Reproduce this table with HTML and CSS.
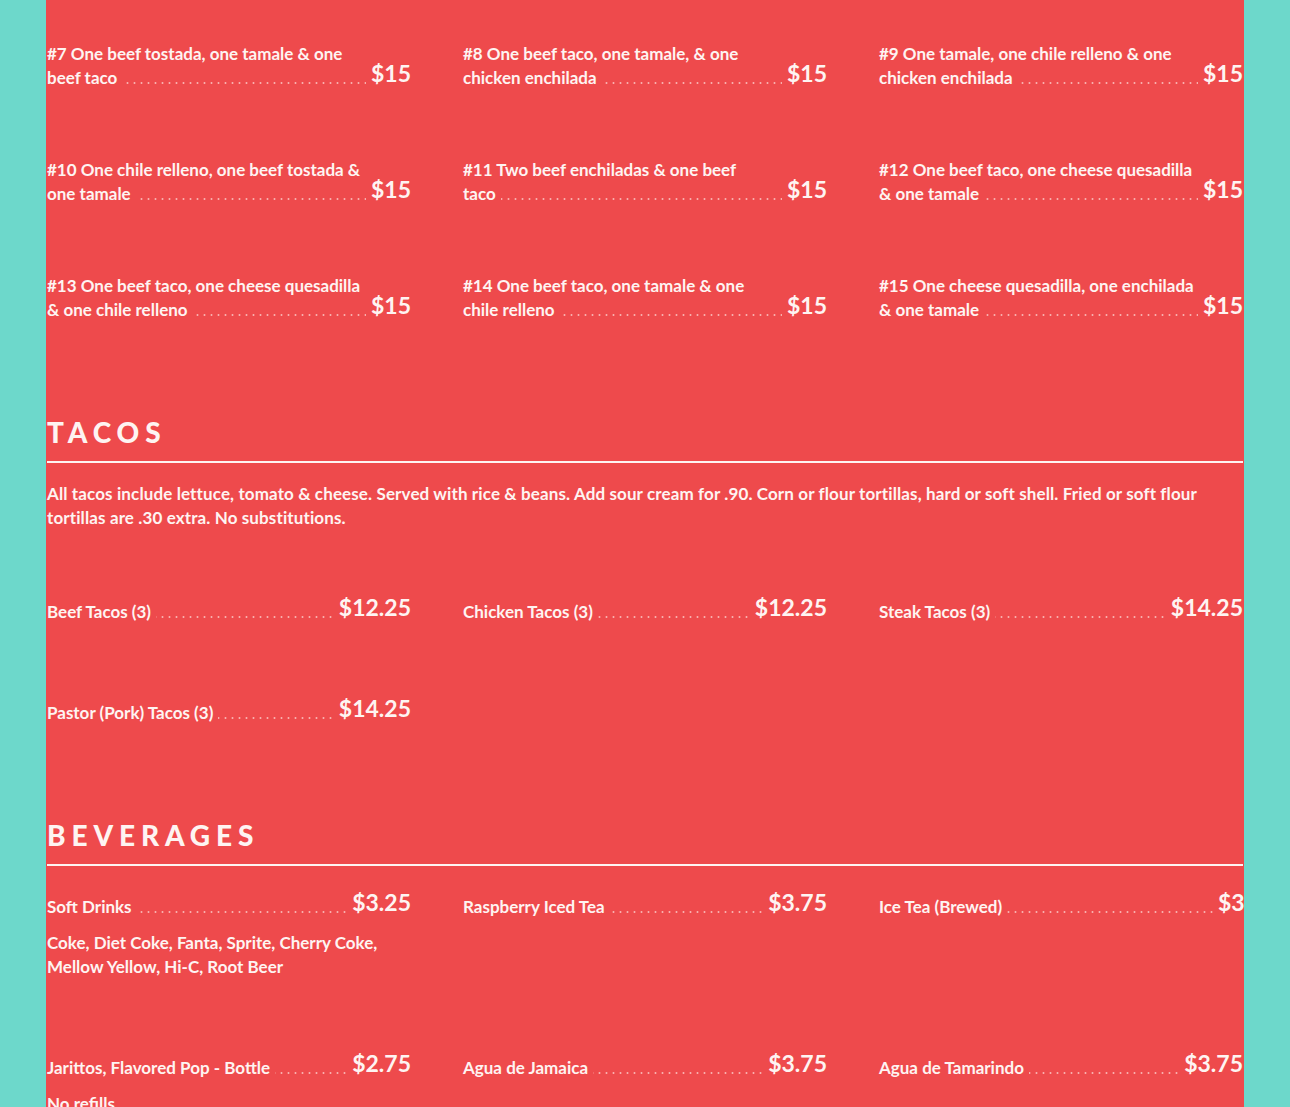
FILE: index.html
```html
<!DOCTYPE html>
<html lang="en">
<head>
<meta charset="utf-8">
<title>Menu</title>
<link rel="stylesheet" href="styles.css">
</head>
<body>
<main class="panel">
  <section class="section section--first">
    <div class="grid grid--combos">
      <div class="item"><div class="item-row"><span class="name"><span class="name-text">#7 One beef tostada, one tamale &amp; one beef taco</span></span><span class="price">$15</span></div></div>
      <div class="item"><div class="item-row"><span class="name"><span class="name-text">#8 One beef taco, one tamale, &amp; one chicken enchilada</span></span><span class="price">$15</span></div></div>
      <div class="item"><div class="item-row"><span class="name"><span class="name-text">#9 One tamale, one chile relleno &amp; one chicken enchilada</span></span><span class="price">$15</span></div></div>
      <div class="item"><div class="item-row"><span class="name"><span class="name-text">#10 One chile relleno, one beef tostada &amp; one tamale</span></span><span class="price">$15</span></div></div>
      <div class="item"><div class="item-row"><span class="name"><span class="name-text">#11 Two beef enchiladas &amp; one beef<br>taco</span></span><span class="price">$15</span></div></div>
      <div class="item"><div class="item-row"><span class="name"><span class="name-text">#12 One beef taco, one cheese quesadilla &amp; one tamale</span></span><span class="price">$15</span></div></div>
      <div class="item"><div class="item-row"><span class="name"><span class="name-text">#13 One beef taco, one cheese quesadilla &amp; one chile relleno</span></span><span class="price">$15</span></div></div>
      <div class="item"><div class="item-row"><span class="name"><span class="name-text">#14 One beef taco, one tamale &amp; one chile relleno</span></span><span class="price">$15</span></div></div>
      <div class="item"><div class="item-row"><span class="name"><span class="name-text">#15 One cheese quesadilla, one enchilada &amp; one tamale</span></span><span class="price">$15</span></div></div>
    </div>
  </section>

  <section class="section">
    <h2 class="section-title">Tacos</h2>
    <p class="section-desc">All tacos include lettuce, tomato &amp; cheese. Served with rice &amp; beans. Add sour cream for .90. Corn or flour tortillas, hard or soft shell. Fried or soft flour tortillas are .30 extra. No substitutions.</p>
    <div class="grid grid--tacos">
      <div class="item"><div class="item-row"><span class="name"><span class="name-text">Beef Tacos (3)</span></span><span class="price">$12.25</span></div></div>
      <div class="item"><div class="item-row"><span class="name"><span class="name-text">Chicken Tacos (3)</span></span><span class="price">$12.25</span></div></div>
      <div class="item"><div class="item-row"><span class="name"><span class="name-text">Steak Tacos (3)</span></span><span class="price">$14.25</span></div></div>
      <div class="item"><div class="item-row"><span class="name"><span class="name-text">Pastor (Pork) Tacos (3)</span></span><span class="price">$14.25</span></div></div>
    </div>
  </section>

  <section class="section">
    <h2 class="section-title">Beverages</h2>
    <div class="grid grid--drinks">
      <div class="item">
        <div class="item-row"><span class="name"><span class="name-text">Soft Drinks</span></span><span class="price">$3.25</span></div>
        <p class="item-desc">Coke, Diet Coke, Fanta, Sprite, Cherry Coke, Mellow Yellow, Hi-C, Root Beer</p>
      </div>
      <div class="item"><div class="item-row"><span class="name"><span class="name-text">Raspberry Iced Tea</span></span><span class="price">$3.75</span></div></div>
      <div class="item"><div class="item-row item-row--overflow"><span class="name"><span class="name-text">Ice Tea (Brewed)</span></span><span class="price">$3.75</span></div></div>
      <div class="item">
        <div class="item-row"><span class="name"><span class="name-text">Jarittos, Flavored Pop - Bottle</span></span><span class="price">$2.75</span></div>
        <p class="item-desc">No refills</p>
      </div>
      <div class="item"><div class="item-row"><span class="name"><span class="name-text">Agua de Jamaica</span></span><span class="price">$3.75</span></div></div>
      <div class="item"><div class="item-row"><span class="name"><span class="name-text">Agua de Tamarindo</span></span><span class="price">$3.75</span></div></div>
    </div>
  </section>
</main>
</body>
</html>
```

FILE: styles.css
```css
html, body {
  margin: 0;
  padding: 0;
}

body {
  background: #6dd8cb;
  font-family: Lato, "Open Sans", "Liberation Sans", sans-serif;
  color: #fef4f2;
}

.panel {
  width: 1196px;
  margin: 0 auto;
  padding: 42px 1px 60px;
  background: #ee4a4c;
  overflow: hidden;
}

.section {
  margin-top: 93px;
}

.section--first {
  margin-top: 0;
}

.section-title {
  margin: 0;
  padding-bottom: 12px;
  border-bottom: 2px solid #fef4f2;
  font-size: 28px;
  line-height: 34px;
  font-weight: 900;
  letter-spacing: 0.21em;
  text-transform: uppercase;
}

.section-desc {
  margin: 19px 0 0;
  font-size: 17px;
  line-height: 24px;
  font-weight: 700;
  letter-spacing: 0.12px;
}

.grid {
  display: grid;
  grid-template-columns: repeat(3, 364px);
  column-gap: 52px;
}

.grid--combos {
  row-gap: 68px;
}

.grid--tacos {
  margin-top: 70px;
  row-gap: 77px;
}

.grid--drinks {
  margin-top: 29px;
  row-gap: 77px;
}

.item-row {
  display: flex;
  align-items: flex-end;
}

.name {
  flex: 1 1 auto;
  min-width: 0;
  font-size: 17px;
  line-height: 24px;
  font-weight: 700;
  background-image: radial-gradient(circle at 3.5px 2px, rgba(255, 240, 236, 0.6) 0.7px, rgba(255, 240, 236, 0) 1.3px);
  background-size: 7px 4px;
  background-repeat: repeat-x;
  background-position: 0 calc(100% - 5px);
}

.name-text {
  background: #ee4a4c;
  padding-right: 5px;
}

.price {
  flex: 0 0 auto;
  margin-left: 5px;
  margin-top: -9px;
  font-size: 23px;
  line-height: 33px;
  font-weight: 700;
}

.item-row--overflow .name {
  flex: 0 0 334px;
}

.item-desc {
  margin: 12px 0 0;
  font-size: 17px;
  line-height: 24px;
  font-weight: 700;
}
```
